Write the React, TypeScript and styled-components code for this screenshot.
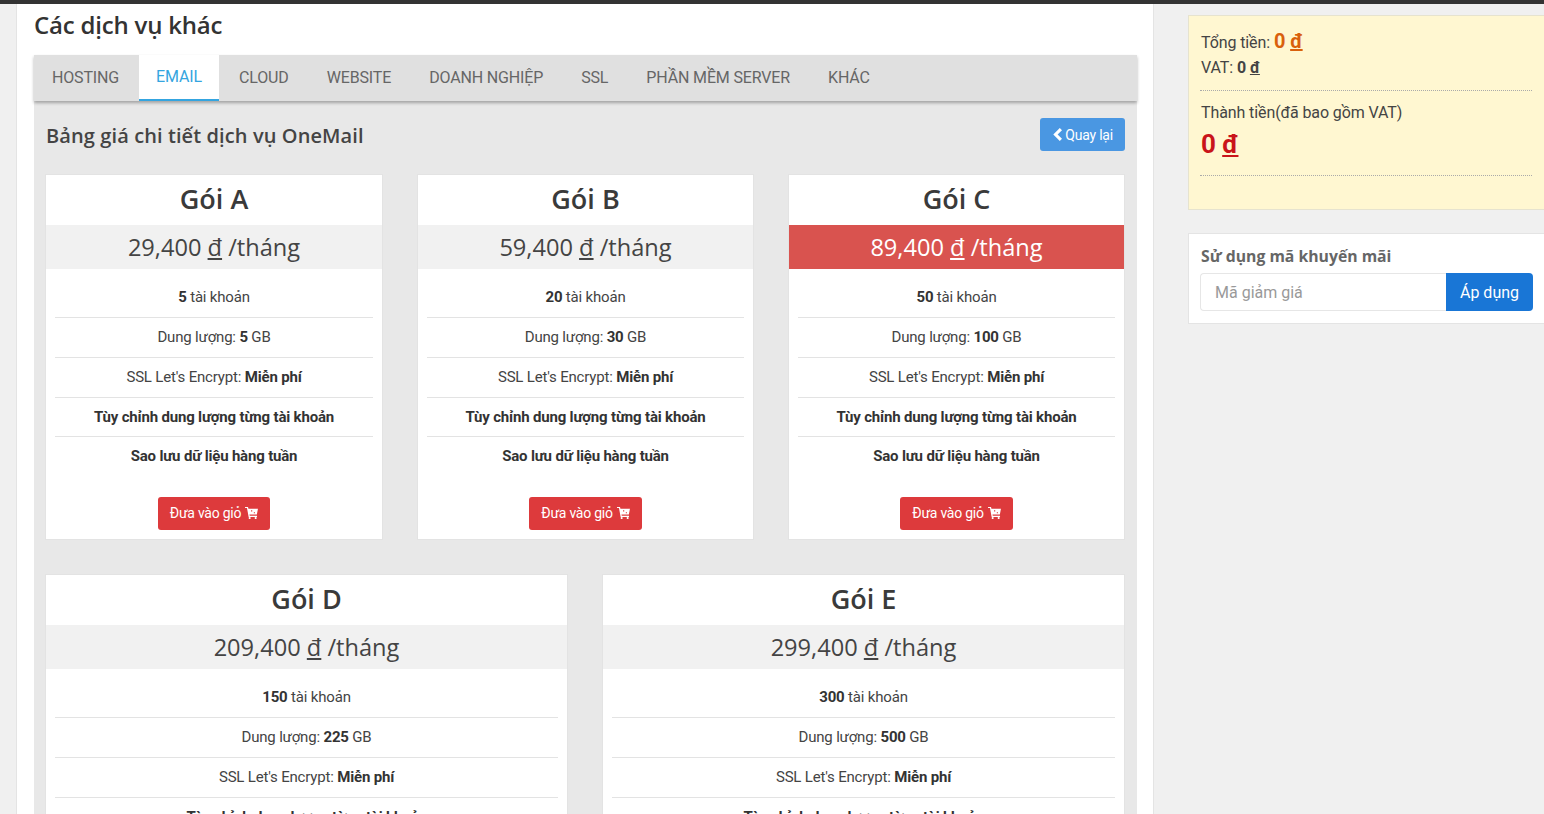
import * as React from "react";
import styled, { createGlobalStyle } from "styled-components";

const Global = createGlobalStyle`
  html, body {
    margin: 0;
    height: 814px;
    overflow: hidden;
    background: #f0f0f0;
    font-family: Roboto, "Liberation Sans", sans-serif;
    color: #333;
  }
  * { box-sizing: border-box; }
`;

const TopBar = styled.div`
  height: 4px;
  background: #333;
`;

const Page = styled.div`
  display: flex;
  align-items: flex-start;
  height: 810px;
  overflow: hidden;
  padding-left: 16px;
`;

const Main = styled.main`
  width: 1138px;
  height: 810px;
  flex-shrink: 0;
  background: #fff;
  border-left: 1px solid #e4e4e4;
  border-right: 1px solid #e4e4e4;
  padding: 0 16px 0 17px;
`;

const Title = styled.h2`
  margin: 0;
  height: 51px;
  padding-top: 5px;
  font-family: "Open Sans", sans-serif;
  font-size: 24px;
  line-height: 32px;
  font-weight: 600;
  letter-spacing: -0.2px;
  color: #333;
`;

const Tabs = styled.nav`
  display: flex;
  height: 46px;
  background: #e0e0e0;
  box-shadow: 0 2px 3px rgba(0, 0, 0, 0.3);
  position: relative;
`;

const Tab = styled.a<{ $active?: boolean }>`
  padding: ${(p) => (p.$active ? "0 17px 2px" : "0 19px 2px")};
  margin-right: ${(p) => (p.$active ? "1px" : "0")};
  display: flex;
  align-items: center;
  font-size: 16px;
  letter-spacing: -0.15px;
  text-transform: uppercase;
  color: ${(p) => (p.$active ? "#34a5e0" : "#666")};
  background: ${(p) => (p.$active ? "#fff" : "transparent")};
  border-bottom: ${(p) => (p.$active ? "2px solid #34a5e0" : "none")};

  &:first-child {
    padding-left: 18px;
    padding-right: 20px;
  }
`;

const Panel = styled.section`
  height: 720px;
  background: #e8e8e8;
  padding: 17px 12px 0 11px;
`;

const PanelHead = styled.div`
  display: flex;
  justify-content: space-between;
  align-items: flex-start;
  height: 56px;
  padding-left: 1px;
`;

const PanelTitle = styled.h3`
  margin: 0;
  padding-top: 3px;
  font-family: "Open Sans", sans-serif;
  font-size: 20px;
  line-height: 30px;
  font-weight: 600;
  letter-spacing: 0.1px;
  color: #444;
`;

const BackButton = styled.button`
  display: flex;
  align-items: center;
  gap: 2px;
  height: 33px;
  padding: 0 12px 0 13px;
  border: 0;
  border-radius: 3px;
  background: #4a97e2;
  color: #fff;
  font-family: Roboto, sans-serif;
  font-size: 14px;
  letter-spacing: -0.2px;
`;

const Row = styled.div<{ $columns: string }>`
  display: grid;
  grid-template-columns: ${(p) => p.$columns};
  column-gap: 34px;
  margin-bottom: 34px;
`;

const Card = styled.article`
  height: 366px;
  background: #fff;
  border: 1px solid #e3e3e3;
  text-align: center;
`;

const CardName = styled.h3`
  margin: 0;
  height: 50px;
  font-family: "Open Sans", sans-serif;
  font-size: 27px;
  line-height: 48px;
  font-weight: 600;
  color: #3a3a3a;
`;

const Price = styled.div<{ $hot?: boolean }>`
  height: 44px;
  font-family: "Open Sans", sans-serif;
  font-size: 23.6px;
  line-height: 44px;
  color: ${(p) => (p.$hot ? "#fff" : "#444")};
  background: ${(p) => (p.$hot ? "#d9534f" : "#f1f1f1")};
`;

const Dong = styled.u``;

const Features = styled.ul`
  list-style: none;
  margin: 0;
  padding: 9.3px 9px 0;
  height: 228px;
`;

const Feature = styled.li`
  height: 39.75px;
  line-height: 39px;
  font-size: 15px;
  letter-spacing: -0.18px;
  color: #444;
  border-bottom: 1px solid #e3e3e3;

  &:last-child {
    border-bottom: 0;
  }

  b {
    font-weight: 700;
    color: #333;
  }
`;

const CartButton = styled.button`
  display: inline-flex;
  align-items: center;
  gap: 4px;
  height: 33px;
  padding: 0 12px 1px;
  border: 0;
  border-radius: 3px;
  background: #dd3a3c;
  color: #fff;
  font-family: Roboto, sans-serif;
  font-size: 14px;
  letter-spacing: -0.25px;
`;

const Side = styled.aside`
  flex: 1;
  padding: 11px 0 0 34px;
  min-width: 0;
`;

const Summary = styled.div`
  width: 380px;
  height: 195px;
  background: #fff7d1;
  border: 1px solid #e6e3cf;
  padding: 13px 11px 0;
  font-size: 16px;
  line-height: 25px;
  letter-spacing: -0.1px;
  color: #444;
`;

const SummaryBlock = styled.div`
  border-bottom: 1px dotted #aaa;
  width: 332px;
  padding-left: 1px;
`;

const TotalTop = styled(SummaryBlock)`
  height: 62px;
`;

const TotalBottom = styled(SummaryBlock)`
  height: 85px;
  padding-top: 9px;
`;

const Orange = styled.b`
  color: #d9600c;
  font-size: 20px;
`;

const Grand = styled.div`
  color: #c9141a;
  font-size: 26px;
  font-weight: 700;
  line-height: 38px;
`;

const Promo = styled.div`
  width: 380px;
  height: 91px;
  margin-top: 23px;
  background: #fff;
  border: 1px solid #e4e4e4;
  padding: 10px 11px 0 11px;
`;

const PromoTitle = styled.div`
  margin: 0 0 5px 1px;
  font-family: "Open Sans", sans-serif;
  font-size: 15.75px;
  line-height: 24px;
  font-weight: 700;
  color: #666;
`;

const PromoForm = styled.div`
  display: flex;
  width: 333px;
  height: 38px;
`;

const PromoInput = styled.input`
  flex: 1;
  min-width: 0;
  border: 1px solid #e6e6e6;
  border-right: 0;
  border-radius: 4px 0 0 4px;
  padding: 0 14px;
  font-family: Roboto, sans-serif;
  font-size: 16px;
  &::placeholder {
    color: #999;
  }
`;

const PromoButton = styled.button`
  width: 87px;
  border: 0;
  border-radius: 0 4px 4px 0;
  background: #1976d6;
  color: #fff;
  font-family: Roboto, sans-serif;
  font-size: 16px;
`;

const CartIcon = () => (
  <svg width="13" height="12" viewBox="0 0 14 13" fill="#fff">
    <path
      fillRule="evenodd"
      d="M0 0h3.200l.5 2H14l-1.200 6.200H4.800l.3 1.300H13v1.200H3.900L2.100 1.200H0zM6.500 3.400v1.400h1.300V3.400zM9.500 5.800v1h1.300v-1z"
    />
    <circle cx="5" cy="12" r="1.100" />
    <circle cx="11.500" cy="12" r="1.100" />
  </svg>
);

const ChevronIcon = () => (
  <svg width="10" height="13" viewBox="0 0 10 13" fill="#fff">
    <polygon points="6.800,0 9,2.200 4.600,6.500 9,10.800 6.800,13 0.300,6.500" />
  </svg>
);

type Plan = {
  name: string;
  price: string;
  accounts: number;
  size: number;
  hot?: boolean;
};

const plans: Plan[] = [
  { name: "Gói A", price: "29,400", accounts: 5, size: 5 },
  { name: "Gói B", price: "59,400", accounts: 20, size: 30 },
  { name: "Gói C", price: "89,400", accounts: 50, size: 100, hot: true },
  { name: "Gói D", price: "209,400", accounts: 150, size: 225 },
  { name: "Gói E", price: "299,400", accounts: 300, size: 500 },
];

const tabs = ["Hosting", "Email", "Cloud", "Website", "Doanh nghiệp", "SSL", "Phần mềm server", "Khác"];

const PlanCard = ({ plan }: { plan: Plan }) => (
  <Card>
    <CardName>{plan.name}</CardName>
    <Price $hot={plan.hot}>
      {plan.price} <Dong>đ</Dong> /tháng
    </Price>
    <Features>
      <Feature>
        <b>{plan.accounts}</b> tài khoản
      </Feature>
      <Feature>
        Dung lượng: <b>{plan.size}</b> GB
      </Feature>
      <Feature>
        SSL Let's Encrypt: <b>Miễn phí</b>
      </Feature>
      <Feature>
        <b>Tùy chỉnh dung lượng từng tài khoản</b>
      </Feature>
      <Feature>
        <b>Sao lưu dữ liệu hàng tuần</b>
      </Feature>
    </Features>
    <CartButton>
      Đưa vào giỏ <CartIcon />
    </CartButton>
  </Card>
);

const App = () => (
  <>
    <Global />
    <TopBar />
    <Page>
      <Main>
        <Title>Các dịch vụ khác</Title>
        <Tabs>
          {tabs.map((t) => (
            <Tab key={t} $active={t === "Email"}>
              {t}
            </Tab>
          ))}
        </Tabs>
        <Panel>
          <PanelHead>
            <PanelTitle>Bảng giá chi tiết dịch vụ OneMail</PanelTitle>
            <BackButton>
              <ChevronIcon /> Quay lại
            </BackButton>
          </PanelHead>
          <Row $columns="338px 337px 337px">
            {plans.slice(0, 3).map((p) => (
              <PlanCard key={p.name} plan={p} />
            ))}
          </Row>
          <Row $columns="523px 523px">
            {plans.slice(3).map((p) => (
              <PlanCard key={p.name} plan={p} />
            ))}
          </Row>
        </Panel>
      </Main>
      <Side>
        <Summary>
          <TotalTop>
            Tổng tiền: <Orange>0 <u>đ</u></Orange>
            <br />
            VAT: <b>0 <u>đ</u></b>
          </TotalTop>
          <TotalBottom>
            Thành tiền(đã bao gồm VAT)
            <Grand>
              0 <u>đ</u>
            </Grand>
          </TotalBottom>
        </Summary>
        <Promo>
          <PromoTitle>Sử dụng mã khuyến mãi</PromoTitle>
          <PromoForm>
            <PromoInput placeholder="Mã giảm giá" />
            <PromoButton>Áp dụng</PromoButton>
          </PromoForm>
        </Promo>
      </Side>
    </Page>
  </>
);

export default App;
